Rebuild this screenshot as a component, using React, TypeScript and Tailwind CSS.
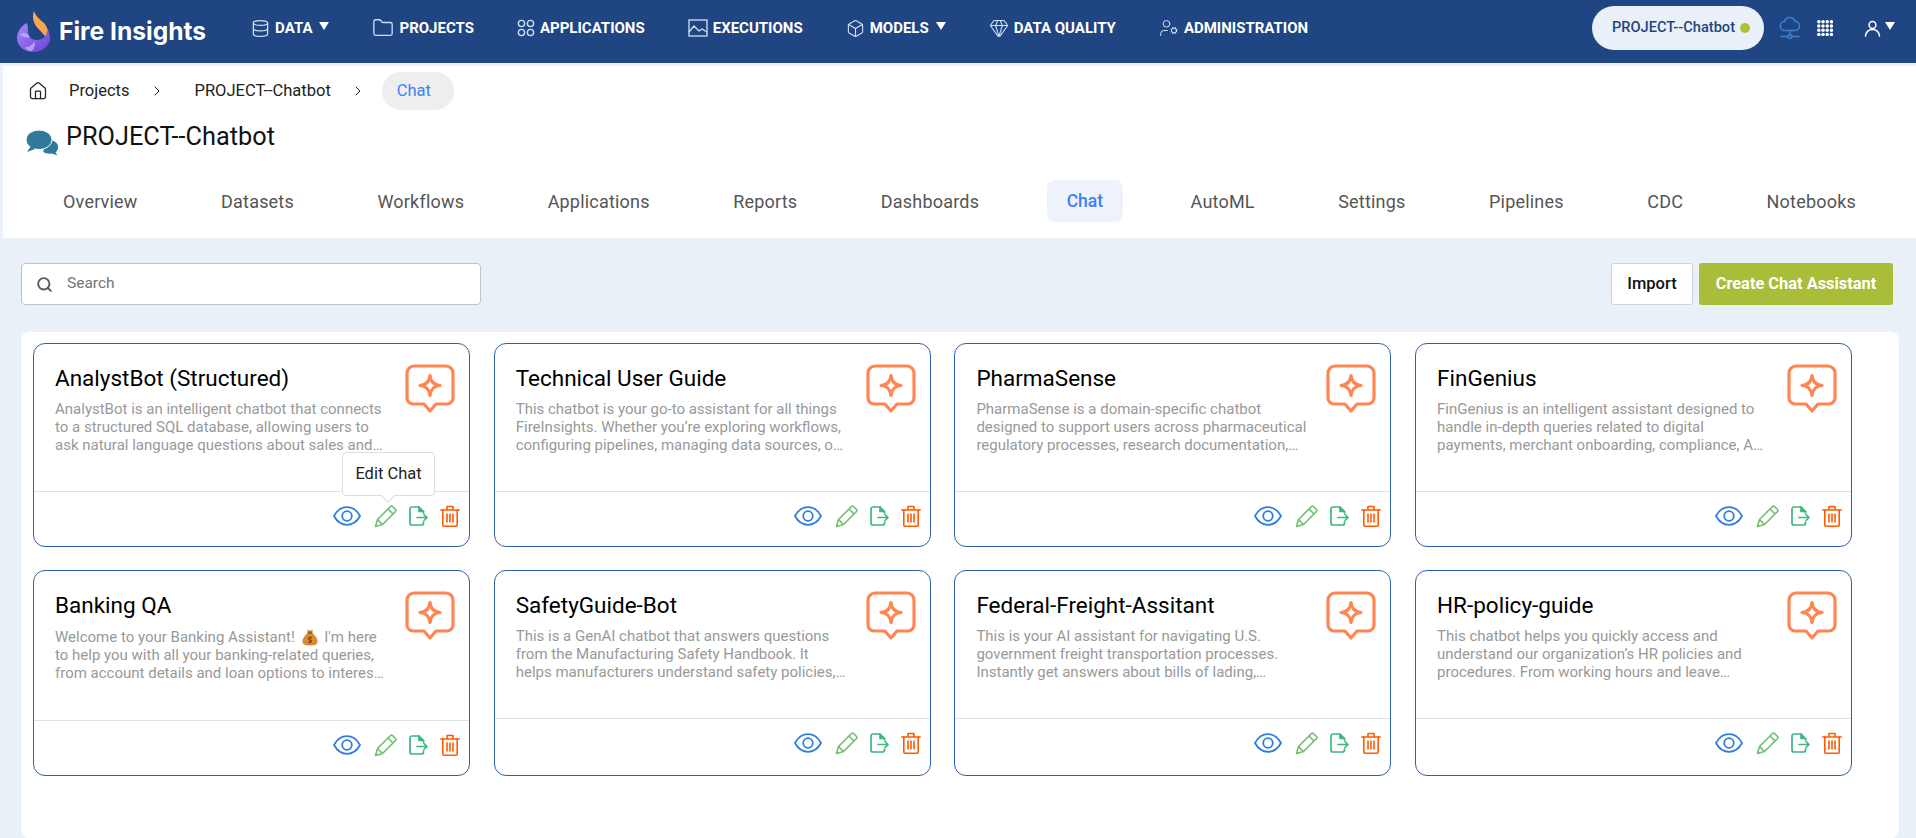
import { ChevronRight, Database, Folder, Box, Gem, UserCog, Search, Home } from 'lucide-react';

const navItems = [
    { label: 'DATA', icon: 'database', caret: true },
    { label: 'PROJECTS', icon: 'folder' },
    { label: 'APPLICATIONS', icon: 'apps' },
    { label: 'EXECUTIONS', icon: 'chart' },
    { label: 'MODELS', icon: 'box', caret: true },
    { label: 'DATA QUALITY', icon: 'gem' },
    { label: 'ADMINISTRATION', icon: 'admin' },
];

const tabs = ['Overview', 'Datasets', 'Workflows', 'Applications', 'Reports', 'Dashboards', 'Chat', 'AutoML', 'Settings', 'Pipelines', 'CDC', 'Notebooks'];

const chats = [
    {
        title: 'AnalystBot (Structured)',
        text: 'AnalystBot is an intelligent chatbot that connects to a structured SQL database, allowing users to ask natural language questions about sales and inventory data.',
        tooltip: true,
    },
    {
        title: 'Technical User Guide',
        text: 'This chatbot is your go-to assistant for all things FireInsights. Whether you’re exploring workflows, configuring pipelines, managing data sources, or reviewing features.',
    },
    {
        title: 'PharmaSense',
        text: 'PharmaSense is a domain-specific chatbot designed to support users across pharmaceutical regulatory processes, research documentation,\nclinical trial submissions.',
    },
    {
        title: 'FinGenius',
        text: 'FinGenius is an intelligent assistant designed to handle in-depth queries related to digital payments, merchant onboarding, compliance, API integrations.',
    },
    {
        title: 'Banking QA',
        text: 'to help you with all your banking-related queries, from account details and loan options to interest rates and credit cards.',
        emoji: true,
    },
    {
        title: 'SafetyGuide-Bot',
        text: 'This is a GenAI chatbot that answers questions from the Manufacturing Safety Handbook. It helps manufacturers understand safety policies,\nprocedures and requirements.',
    },
    {
        title: 'Federal-Freight-Assitant',
        text: 'This is your AI assistant for navigating U.S. government freight transportation processes. Instantly get answers about bills of lading,\ncarrier rules and claims.',
    },
    {
        title: 'HR-policy-guide',
        text: 'This chatbot helps you quickly access and understand our organization’s HR policies and procedures. From working hours and leave entitlements to benefits.',
    },
];

function Caret() {
    return <span className="mb-1 ml-[2px] h-0 w-0 border-x-[5.5px] border-t-[8px] border-x-transparent border-t-white" />;
}

function NavIcon({ name }: { name: string }) {
    const cls = 'shrink-0 text-[#cfe1f7]';
    if (name === 'database') return <Database size={19} strokeWidth={1.6} className={cls} />;
    if (name === 'folder') return <Folder size={22} strokeWidth={1.4} className={cls} />;
    if (name === 'box') return <Box size={19} strokeWidth={1.4} className={cls} />;
    if (name === 'gem') return <Gem size={20} strokeWidth={1.3} className={cls} />;
    if (name === 'admin') return <UserCog size={20} strokeWidth={1.2} className={cls} />;
    if (name === 'apps') {
        return (
            <svg width="18" height="18" viewBox="0 0 20 20" fill="none" stroke="currentColor" strokeWidth="1.5" className={cls}>
                <circle cx="5" cy="5" r="3.5" />
                <circle cx="15" cy="5" r="3.5" />
                <circle cx="5" cy="15" r="3.5" />
                <circle cx="15" cy="15" r="3.5" />
            </svg>
        );
    }
    return (
        <svg width="20" height="18" viewBox="0 0 20 18" fill="none" stroke="currentColor" strokeWidth="1.3" className={cls}>
            <rect x="1" y="1" width="18" height="16" />
            <path d="M1 13l5-6 5 5 3-2 5 3" />
        </svg>
    );
}

function Logo() {
    return (
        <svg width="34" height="42" viewBox="0 0 34 42" className="shrink-0">
            <defs>
                <linearGradient id="flame" x1="0" y1="0" x2="0" y2="1">
                    <stop offset="0" stopColor="#f6a94f" />
                    <stop offset="1" stopColor="#f3a25c" />
                </linearGradient>
                <linearGradient id="orb" x1="0" y1="0" x2="1" y2="1">
                    <stop offset="0" stopColor="#a78bfa" />
                    <stop offset="1" stopColor="#6d3fd6" />
                </linearGradient>
            </defs>
            <path d="M17 0c-2 6-1 10 2 15 3 4 5 5 8 9l5 6c1-7-1-12-4-17C24 9 19 6 17 0z" fill="url(#flame)" />
            <path d="M10 12C4 15 0 21 0 27c0 8 7 14 16 14s17-6 17-14c0-3-1-6-3-8 0 6-4 10-10 10-5 0-9-3-9-8 0-3 0-6-1-9z" fill="url(#orb)" />
            <path d="M3 23c4-2 8-1 10 3-3 1-7 1-10-3zM8 36c4 0 8-2 9-6 2 4 0 9-3 10-3 0-5-2-6-4z" fill="#c4b5fd" opacity="0.75" />
        </svg>
    );
}

function CloudNet() {
    return (
        <svg width="22" height="24" viewBox="0 0 22 24" fill="none" stroke="#3f7fd0" strokeWidth="1.5" strokeLinecap="round" strokeLinejoin="round">
            <path d="M6 14.5a4.5 4.5 0 0 1-.5-9 5.500 5.500 0 0 1 10.600 0 4.500 4.500 0 0 1-.1 9z" />
            <path d="M11 14.500v4.500M2 20.500h7M13 20.500h7" />
            <circle cx="11" cy="20.500" r="2" />
        </svg>
    );
}

function DotGrid() {
    const dots = [1.8, 6, 10.2, 14.4];
    return (
        <svg width="16" height="16" viewBox="0 0 16 16" fill="#fff">
            {dots.map((y) => dots.map((x) => <circle key={`${x}-${y}`} cx={x} cy={y} r="1.75" />))}
        </svg>
    );
}

function UserIcon() {
    return (
        <svg width="17" height="17" viewBox="0 0 17 17" fill="none" stroke="#fff" strokeWidth="1.5" strokeLinecap="round">
            <circle cx="8.500" cy="5" r="3.400" />
            <path d="M1.500 16c.6-4 3.200-6.500 7-6.500s6.400 2.500 7 6.500" />
        </svg>
    );
}

function ChatBubbles() {
    return (
        <svg width="33" height="26" viewBox="0 0 33 26" fill="#2f7a9b" className="shrink-0">
            <path d="M22 10c4 0 9 1 10 6 .5 3-1 5-2.500 6.500l2 3-5.500-2c-3 .5-7 0-9-2z" />
            <ellipse cx="13" cy="9.800" rx="13" ry="9.800" stroke="#fff" strokeWidth="1" />
            <path d="M5 16L1 22l8-3z" />
        </svg>
    );
}

function ChatSpark() {
    return (
        <svg width="50" height="50" viewBox="0 0 50 50" fill="none" stroke="#ff8552" strokeWidth="3.200" strokeLinecap="round" strokeLinejoin="round" className="shrink-0">
            <path d="M9 2h32a7 7 0 0 1 7 7v25a6 6 0 0 1-6 6H31l-6 7-6-7H8a6 6 0 0 1-6-6V9a7 7 0 0 1 7-7z" />
            <path d="M25 11.500Q25.800 20.700 35 21.500 25.800 22.300 25 31.500 24.200 22.300 15 21.500 24.200 20.700 25 11.500z" />
        </svg>
    );
}

function EyeIcon() {
    return (
        <svg width="28" height="20" viewBox="0 0 28 20" fill="none" stroke="#2f7de1" strokeWidth="1.800">
            <path d="M1 10C4 4.500 8.500 1.200 14 1.200S24 4.500 27 10c-3 5.500-7.500 8.800-13 8.800S4 15.500 1 10z" />
            <circle cx="14" cy="10" r="4.800" />
        </svg>
    );
}

function PencilIcon() {
    return (
        <svg width="23" height="23" viewBox="0 0 23 23" fill="none" stroke="#6fbf73" strokeWidth="1.600" strokeLinejoin="round">
            <path d="M1.500 21.500l2-7L16.500 1.500a1.500 1.500 0 0 1 2 0l3 3a1.500 1.500 0 0 1 0 2L8.500 19.500z" />
            <path d="M14 4l5 5M3.500 14.500l5 5" />
        </svg>
    );
}

function ExportIcon() {
    return (
        <svg width="19" height="20" viewBox="0 0 19 20" fill="none" stroke="#3fb77f" strokeWidth="1.700" strokeLinecap="round" strokeLinejoin="round">
            <path d="M14.500 7V5.500L10 1H3a2 2 0 0 0-2 2v14a2 2 0 0 0 2 2h9.500a2 2 0 0 0 2-2v-1" />
            <path d="M10 1v4.500h4.500" fill="#3fb77f" />
            <path d="M8 11.500h10M15 8.500l3 3-3 3" />
        </svg>
    );
}

function TrashIcon() {
    return (
        <svg width="20" height="22" viewBox="0 0 20 22" fill="none" stroke="#ff5a00" strokeWidth="1.600" strokeLinecap="round" strokeLinejoin="round">
            <path d="M.8 5h18.400M7 5V1.500h6V5" />
            <path d="M2.800 5v15a1.200 1.200 0 0 0 1.200 1.200h12a1.200 1.200 0 0 0 1.200-1.200V5" />
            <path d="M7 9v8M10 9v8M13 9v8" />
        </svg>
    );
}

function MoneyBag() {
    return (
        <svg width="16" height="18" viewBox="0 0 16 18" className="mx-[3px] inline-block align-[-4px]">
            <path d="M5 1.500l1.500 1h3L11 1.500 10 5H6z" fill="#c9772b" />
            <path d="M6 5h4c3 2 5.500 5.500 5.500 8.500 0 3-2.500 4-7.500 4s-7.500-1-7.500-4C.5 10.500 3 7 6 5z" fill="#d98a32" />
            <rect x="5.500" y="4.200" width="5" height="1.400" fill="#8a5a20" />
            <path d="M10 9.500H7.500a1.200 1.200 0 0 0 0 2.400h1a1.200 1.200 0 0 1 0 2.400H6M8 8.500v6.800" fill="none" stroke="#6b3f10" strokeWidth="0.9" />
        </svg>
    );
}

export default function App() {
    return (
        <div className="flex h-screen flex-col overflow-hidden bg-[#e9f0f8] font-['Roboto',sans-serif]">
            {/* TOP NAV */}
            <header className="flex h-[63px] shrink-0 items-center bg-[#1f4582] pr-[21px] pl-[17px] text-white">
                <div className="flex items-center gap-[8px]">
                    <Logo />
                    <span className="font-['Inter',sans-serif] text-[24.6px] font-bold">Fire Insights</span>
                </div>
                <nav className="ml-[45px] flex flex-1 items-center gap-[43px] pb-[7px]">
                    {navItems.map((item) => (
                        <div key={item.label} className="flex items-center gap-[5px] text-[15px] font-bold">
                            <NavIcon name={item.icon} />
                            <span>{item.label}</span>
                            {item.caret && <Caret />}
                        </div>
                    ))}
                </nav>
                <div className="flex items-center pb-[7px]">
                    <div className="flex h-[44px] w-[172px] items-center rounded-full bg-[#e9f0f8] pl-[20px] text-[14.6px] font-medium text-[#1f4582]">
                        PROJECT--Chatbot
                        <span className="ml-[5px] h-[10px] w-[10px] rounded-full bg-[#afc236]" />
                    </div>
                    <div className="ml-[15px]"><CloudNet /></div>
                    <div className="ml-[16px]"><DotGrid /></div>
                    <div className="ml-[31px] flex items-center gap-[2px]">
                        <UserIcon />
                        <Caret />
                    </div>
                </div>
            </header>

            {/* PROJECT HEADER */}
            <div className="mt-[3px] ml-[3px] h-[172px] shrink-0 bg-white">
                <div className="box-content flex h-[34px] items-center pt-[8px] pl-[25px] text-[16.5px] text-[#222]">
                    <Home size={20} strokeWidth={1.5} />
                    <span className="ml-[21px]">Projects</span>
                    <ChevronRight size={16} strokeWidth={1.5} className="ml-[19px]" />
                    <span className="ml-[30px]">PROJECT--Chatbot</span>
                    <ChevronRight size={16} strokeWidth={1.5} className="ml-[19px]" />
                    <span className="ml-[16px] rounded-full bg-[#eeeeee] py-[7px] pr-[23px] pl-[15px] text-[#3b82f6]">Chat</span>
                </div>
                <div className="mt-[11px] flex items-start pl-[23px]">
                    <span className="mt-[11px]"><ChatBubbles /></span>
                    <h1 className="ml-[7px] text-[25.3px] leading-[36px] text-[#111]">PROJECT--Chatbot</h1>
                </div>
                <div className="mt-[24px] flex items-center justify-between pr-[40px] pl-[40px] text-[18px] tracking-[0.2px] text-[#555]">
                    {tabs.map((tab) => (
                        <div
                            key={tab}
                            className={
                                tab === 'Chat'
                                    ? 'mx-[4px] flex h-[42px] items-center rounded-[8px] bg-[#eef2fa] px-[20px] text-[17.5px] font-medium tracking-normal text-[#3b82f6]'
                                    : 'flex h-[42px] items-center px-[20px]'
                            }
                        >
                            {tab}
                        </div>
                    ))}
                </div>
            </div>

            {/* TOOLBAR */}
            <div className="mt-[25px] flex shrink-0 items-center justify-between pr-[23px] pl-[21px]">
                <div className="flex h-[42px] w-[460px] items-center rounded-[4px] border border-[#b9c4d0] bg-white pl-[14px] text-[15.5px] text-[#757575]">
                    <Search size={17} strokeWidth={2.6} className="text-[#555]" />
                    <span className="ml-[14px]">Search</span>
                </div>
                <div className="flex gap-[6px]">
                    <button className="h-[42px] w-[82px] rounded-[3px] border border-[#ccd3dd] bg-white text-[16.5px] font-medium text-[#111]">Import</button>
                    <button className="h-[42px] w-[194px] rounded-[3px] bg-[#a9bd38] text-[16.4px] font-bold text-white">Create Chat Assistant</button>
                </div>
            </div>

            {/* CHAT CARDS */}
            <div className="mt-[27px] mr-[17px] ml-[21px] flex-1 rounded-[8px] bg-white pt-[11px] pl-[12px]">
                <div className="grid grid-cols-[repeat(4,437px)] gap-x-[23.7px] gap-y-[23px]">
                    {chats.map((chat) => (
                        <div key={chat.title} className="relative rounded-[12px] border border-[#2f5fa8] bg-white">
                            <div className={chat.emoji ? 'flex justify-between pt-[20px] pr-[14px] pb-[38px] pl-[21px]' : 'flex justify-between pt-[20px] pr-[14px] pb-[37px] pl-[21px]'}>
                                <div className="w-[330px]">
                                    <h3 className="text-[22.5px] leading-[28px] text-black">{chat.title}</h3>
                                    <p className={chat.emoji ? 'mt-[9px] line-clamp-3 text-[15px] leading-[18px] whitespace-pre-line text-[#999]' : 'mt-[8px] line-clamp-3 text-[15px] leading-[18px] whitespace-pre-line text-[#999]'}>
                                        {chat.emoji && (
                                            <>
                                                Welcome to your Banking Assistant! <MoneyBag /> I'm here{' '}
                                            </>
                                        )}
                                        {chat.text}
                                    </p>
                                </div>
                                <ChatSpark />
                            </div>
                            <div className="flex h-[55px] items-center justify-end border-t border-[#e2e2e2] pr-[9px] pb-[6px]">
                                <EyeIcon />
                                <span className="ml-[13px]"><PencilIcon /></span>
                                <span className="ml-[12px]"><ExportIcon /></span>
                                <span className="ml-[12px]"><TrashIcon /></span>
                            </div>
                            {chat.tooltip && (
                                <div className="absolute top-[108px] left-[308px] flex h-[44px] w-[93px] items-center justify-center rounded-[4px] border border-[#dddddd] bg-white text-[16.5px] text-[#222]">
                                    Edit Chat
                                    <span className="absolute -bottom-[6px] left-[40px] h-[10px] w-[10px] rotate-45 border-r border-b border-[#dddddd] bg-white" />
                                </div>
                            )}
                        </div>
                    ))}
                </div>
            </div>
        </div>
    );
}
